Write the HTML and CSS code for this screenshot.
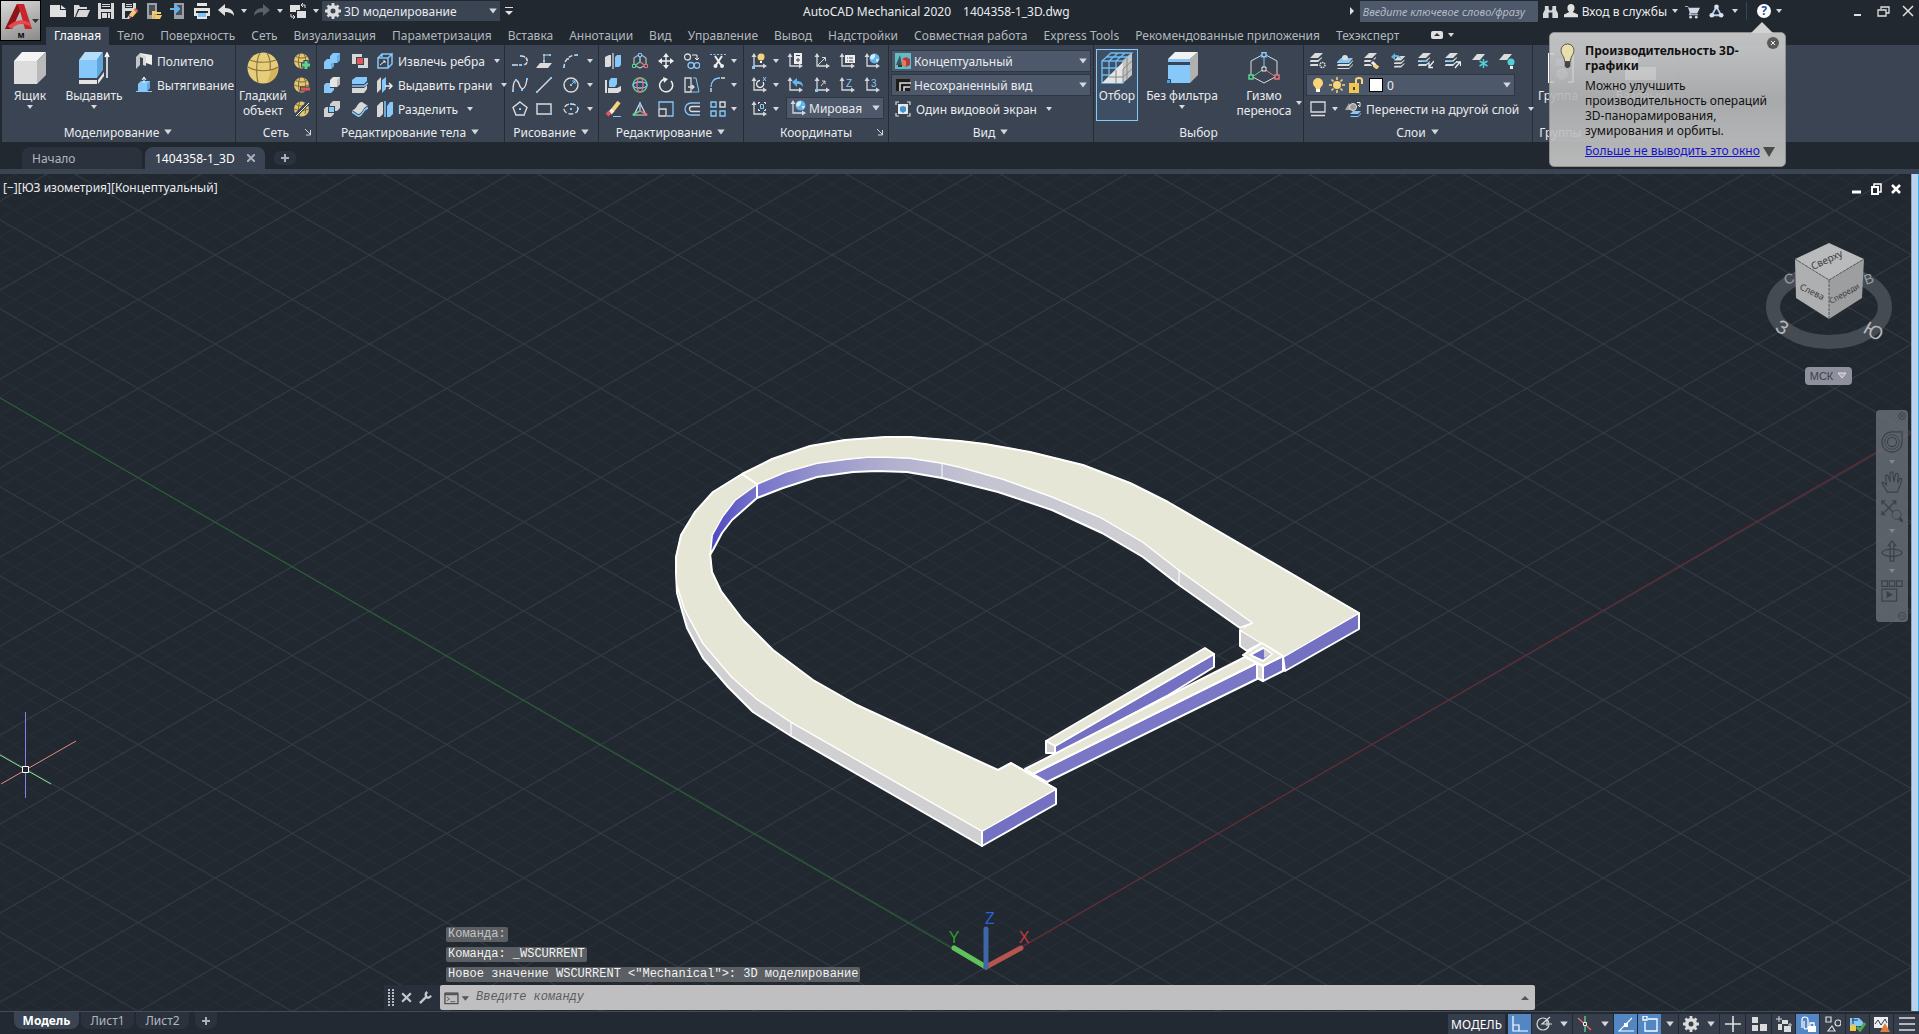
FILE: index.html
```html
<!DOCTYPE html>
<html lang="ru">
<head>
<meta charset="utf-8">
<title>AutoCAD Mechanical 2020 — 1404358-1_3D.dwg</title>
<link rel="stylesheet" href="styles.css">
</head>
<body>
<svg class="defs" aria-hidden="true">
  <symbol id="new" viewBox="0 0 18 16"><path fill="#e0e0e0" d="M1 2h10v5h6v7H1zM12 2l5 4h-5z"/></symbol>
  <symbol id="open" viewBox="0 0 18 16"><path fill="#d8d8d8" d="M1 2h5l1 2h7v2H5L2 14H1zM6 7h11l-3 7H3z"/></symbol>
  <symbol id="save" viewBox="0 0 16 16"><path fill="#d8d8d8" d="M0 0h16v16H0z"/><path fill="#212830" d="M3 0h10v6H3zM3 9h10v7H3z"/><path fill="#d8d8d8" d="M4 1h8v1H4zM4 3h8v1H4zM4 10h5v5H4zM10 10h2v5h-2z"/></symbol>
  <symbol id="saveas" viewBox="0 0 16 16"><path fill="#d8d8d8" d="M0 0h14v9l-7 7H0z"/><path fill="#212830" d="M3 0h8v5H3zM3 8h7l-5 7H3z"/><path fill="#d8d8d8" d="M4 1h6v1H4zM4 3h6v1H4z"/><path stroke="#f2c96b" stroke-width="4" d="M14 7l-5 6"/><path fill="#e06060" d="M13 5l3 2-1 3-3-3zM7 15l0-3 3 2z"/></symbol>
  <symbol id="webopen" viewBox="0 0 16 16"><path fill="#9aa0a6" d="M1 0h10v16H1z"/><path fill="#4a5058" d="M3 2h6v10H3z"/><path fill="#f2c96b" d="M6 8h4l1 1h4v2H9l-2 5H6zM9 12h7l-2 4H8z"/></symbol>
  <symbol id="websave" viewBox="0 0 16 16"><path fill="#9aa0a6" d="M4 0h10v16H4z"/><path fill="#4a5058" d="M6 2h6v10H6z"/><path fill="none" stroke="#5cb8f5" stroke-width="2" d="M0 6h8M5 2l4 4-4 4"/></symbol>
  <symbol id="print" viewBox="0 0 16 16"><path fill="#e4e4e4" d="M3 0h10v3H3zM0 5h16v8H0z"/><path fill="#212830" d="M2 8h12v2H2z"/><path fill="#e4e4e4" d="M3 10h10v6H3z"/><path fill="#7cc4fa" d="M4 10h8v4H4z"/></symbol>
  <symbol id="undo" viewBox="0 0 18 16"><path fill="#e0e0e0" d="M1 7l7-6v4c6 0 9 3 9 8-2-3-5-4-9-4v4z"/></symbol>
  <symbol id="redo" viewBox="0 0 18 16"><path fill="#5a616b" d="M17 7l-7-6v4c-6 0-9 3-9 8 2-3 5-4 9-4v4z"/></symbol>
  <symbol id="swap" viewBox="0 0 18 16"><path fill="#e0e0e0" d="M1 2h10v7H1zM8 8h9v7H8z"/><path fill="#212830" d="M7 7h9v1H8v1H7z"/><path fill="none" stroke="#e0e0e0" d="M12 2h4v3M14 0l-2 2 2 2M2 11v3h4M4 12l2 2-2 2"/></symbol>
  <symbol id="gear" viewBox="0 0 16 16"><circle cx="8" cy="8" r="4.300" fill="none" stroke="#dcdcdc" stroke-width="3.600"/><path stroke="#dcdcdc" stroke-width="2.800" d="M8 0v4M8 12v4M0 8h4M12 8h4M2.500 2.500l2.500 2.500M11 11l2.500 2.500M13.500 2.500L11 5M5 11l-2.500 2.500"/></symbol>
  <symbol id="dn" viewBox="0 0 8 8"><path fill="#d4d7dc" d="M1 2h6L4 6z"/></symbol>
  <symbol id="corner" viewBox="0 0 8 8"><path fill="none" stroke="#d4d7dc" d="M1 1l5 5M6.500 2v5H2"/></symbol>
  <symbol id="bino" viewBox="0 0 16 16"><path fill="#d4d7dc" d="M2 2h4v3l1 2h2l1-2V2h4v4l2 4v5h-6V9H6v6H0v-5l2-4z"/></symbol>
  <symbol id="user" viewBox="0 0 16 16"><path fill="#e0e0e0" d="M8 0c5 0 5 7 2 9l6 3v3H0v-3l6-3C3 7 3 0 8 0z"/></symbol>
  <symbol id="cart" viewBox="0 0 16 16"><path fill="#d0d8e8" d="M0 2h3l1 2h12l-3 6H6v1h8v1H4l1-3-2-6H0z"/><circle cx="6" cy="14" r="1.500" fill="#d0d8e8"/><circle cx="12" cy="14" r="1.500" fill="#d0d8e8"/></symbol>
  <symbol id="a360" viewBox="0 0 16 16"><path fill="none" stroke="#b9cdea" stroke-width="2" d="M8 3L3 12h10z"/><circle cx="8" cy="3" r="2.500" fill="#d6e2f4"/><circle cx="3" cy="12" r="2.500" fill="#d6e2f4"/><circle cx="13" cy="12" r="2.500" fill="#d6e2f4"/></symbol>

  <symbol id="box" viewBox="0 0 32 32"><path fill="#dcdcdc" d="M0 9h23v23H0z"/><path fill="#f4f4f4" d="M0 9l8-9h24l-9 9z"/><path fill="#b9b9b9" d="M23 9l9-9v23l-9 9z"/></symbol>
  <symbol id="extrude" viewBox="0 0 32 32"><path fill="#86c8fa" d="M1 8h18v18H1z"/><path fill="#b4dcfb" d="M1 8l6-8h18l-6 8z"/><path fill="#5fa6dc" d="M19 8l6-8v18l-6 8z"/><path fill="#e4e4e4" d="M1 28h18v4H1zM20 28l6-8v4l-6 8z"/><path fill="none" stroke="#fff" stroke-width="1.500" d="M29 26V3M27 5l2-4 2 4"/></symbol>
  <symbol id="poly" viewBox="0 0 16 16"><path fill="#c4c4c4" d="M0 4l4-4v12l-4 4z"/><path fill="#eee" d="M4 0l12 2v10l-6-2V5L4 4z"/><path fill="#dadada" d="M4 1l6 2v10l-3-1V5L4 4z"/></symbol>
  <symbol id="pull" viewBox="0 0 16 16"><path fill="#86c8fa" d="M2 7l3-3h9v7l-3 3H2z"/><path fill="#5fa6dc" d="M11 7l3-3v7l-3 3z"/><path stroke="#fff" fill="none" d="M8 6V0M6 3l2-3 2 3"/><path stroke="#86c8fa" d="M0 14.500h16"/></symbol>
  <symbol id="smooth" viewBox="0 0 32 32"><circle cx="16" cy="16" r="15.500" fill="#e7cd79"/><path fill="#d4b55b" d="M20 31c8-2 11-10 11-15l-7 3z"/><path fill="none" stroke="#8a7640" stroke-width="1.200" d="M1 15c8 5 22 5 30 0M3 8c7 3 19 3 26 0M13 1c-4 6-4 22-2 30M20 1c3 5 4 10 3 17"/></symbol>
  <symbol id="ball" viewBox="0 0 16 16"><circle cx="7.500" cy="8" r="7.500" fill="#e3c871"/><path fill="none" stroke="#7d6b3b" d="M0 8c5 2 10 2 15 0M2 3.500c3 2 8 2 11 0M6 .5c-2 4-2 11 0 15M10 1c2 3 2 8 1 12"/></symbol>
  <symbol id="mplus" viewBox="0 0 16 16"><use href="#ball"/><path stroke="#3b4453" stroke-width="5" d="M12 7v9M7 12h9"/><path stroke="#5fd38d" stroke-width="3" d="M12 8v8M8 12h8"/></symbol>
  <symbol id="mminus" viewBox="0 0 16 16"><use href="#ball"/><path stroke="#3b4453" stroke-width="5" d="M6 12h10"/><path stroke="#e0575b" stroke-width="3" d="M7 12h9"/></symbol>
  <symbol id="mcrease" viewBox="0 0 16 16"><use href="#ball"/><path stroke="#3b4453" stroke-width="4" d="M1 15L15 1"/><path stroke="#eee" d="M2 15L15 2"/></symbol>
  <symbol id="union" viewBox="0 0 16 16"><path fill="#86c8fa" d="M0 9l3-3h3V3l3-3h7v7l-3 3h-3v3l-3 3H0z"/><path fill="#62acdf" d="M13 3l3-3v7l-3 3zM7 10h3v3l-3 3z"/></symbol>
  <symbol id="subtract" viewBox="0 0 16 16"><path fill="#86c8fa" d="M0 8l2-2h4v5h4v2l-3 3H0z"/><path fill="#e4e4e4" d="M6 3l3-3h7v7l-3 3H6z"/><path fill="#bbb" d="M13 3l3-3v7l-3 3z"/></symbol>
  <symbol id="intersect" viewBox="0 0 16 16"><path fill="#d0d0d0" d="M0 8l2-2h8v7l-3 3H0zM6 3l3-3h7v7l-3 3H6z"/><path fill="#3b4453" d="M4 5h7v7H4z"/><path fill="#86c8fa" d="M5 6h5v5H5z"/></symbol>
  <symbol id="interf" viewBox="0 0 16 16"><path fill="#d8d8d8" d="M0 1h10v10H0zM6 5h10v10H6z"/><path fill="#3b4453" d="M4 4h8v8H4z"/><path fill="#e0575b" d="M5 5h6v6H5z"/></symbol>
  <symbol id="slice" viewBox="0 0 16 16"><path fill="#86c8fa" d="M0 3l4-3h11v4l-3 3H0z"/><path fill="#d8d8d8" d="M0 11h12l3-3v4l-3 4H0z"/><path stroke="#86c8fa" fill="none" stroke-width="1.500" d="M0 9h12l4-3"/></symbol>
  <symbol id="thick" viewBox="0 0 16 16"><path fill="#d8d8d8" d="M0 9c5 0 5-8 10-8l6 4c-5 0-5 8-10 8z"/><path fill="#86c8fa" d="M0 10l6 4c5 0 5-8 10-8v2c-5 1-5 8-10 8l-6-4z"/></symbol>
  <symbol id="edges" viewBox="0 0 16 16"><path fill="none" stroke="#86c8fa" stroke-width="1.500" d="M1 5h10v10H1zM1 5l4-4h10l-4 4M15 1v10l-4 4M5 1v3"/><path stroke="#eee" fill="none" d="M3 12l5-4M6 8h2v2"/></symbol>
  <symbol id="faces" viewBox="0 0 16 16"><path fill="#d8d8d8" d="M0 4l4-4v12l-4 4z"/><path fill="#86c8fa" d="M5 3l4-3v12l-4 4z"/><path stroke="#eee" stroke-width="1.500" fill="none" d="M8 9h7M12 6l3 3-3 3"/></symbol>
  <symbol id="separate" viewBox="0 0 16 16"><path fill="#d8d8d8" d="M0 5l4-4h2v12l-3 3H0z"/><path fill="#86c8fa" d="M10 5l3-4h3v12l-3 3h-3z"/><path stroke="#86c8fa" stroke-width="1.500" d="M8 0v16"/></symbol>

  <symbol id="pline" viewBox="0 0 16 16"><path fill="none" stroke="#dcdcdc" stroke-width="1.500" stroke-dasharray="4 1" d="M2 12h6M9 3c8 0 8 9 2 9"/><path fill="#86c8fa" d="M0 11h2v2H0zM8 11h2v2H8zM8 2h2v2H8z"/></symbol>
  <symbol id="plane" viewBox="0 0 16 16"><path fill="#dcdcdc" d="M0 15l4-5h12l-4 5z"/><path fill="none" stroke="#dcdcdc" d="M8 12V2h6"/><path fill="#86c8fa" d="M7 1h2v2H7zM13 1h2v2h-2zM7 7h2v2H7z"/></symbol>
  <symbol id="arc" viewBox="0 0 16 16"><path fill="none" stroke="#dcdcdc" stroke-width="1.400" stroke-dasharray="4 2" d="M1 15C1 7 6 2 14 2"/><path fill="#86c8fa" d="M0 13h2v2H0zM13 1h2v2h-2zM4 5h2v2H4z"/></symbol>
  <symbol id="spline" viewBox="0 0 16 16"><path fill="none" stroke="#dcdcdc" stroke-width="1.400" d="M1 14C1 2 5 1 7 7s6 8 8-5"/><path fill="#86c8fa" d="M0 13h2v2H0zM3 2h2v2H3zM9 12h2v2H9zM14 1h2v2h-2z"/></symbol>
  <symbol id="line" viewBox="0 0 16 16"><path stroke="#dcdcdc" stroke-width="1.400" d="M1 15L15 1"/><path fill="#86c8fa" d="M0 14h2v2H0zM14 0h2v2h-2z"/></symbol>
  <symbol id="circle" viewBox="0 0 16 16"><circle cx="8" cy="8" r="7" fill="none" stroke="#dcdcdc" stroke-width="1.400"/><path stroke="#86c8fa" fill="none" d="M8 8l4-4M9 4h3v3"/><path fill="#86c8fa" d="M7 7h2v2H7z"/></symbol>
  <symbol id="pent" viewBox="0 0 16 16"><path fill="none" stroke="#dcdcdc" stroke-width="1.400" d="M8 1l7 5.500L12 14H4L1 6.500z"/><path fill="#86c8fa" d="M7 7h2v2H7zM11 13h2v2h-2z"/></symbol>
  <symbol id="rect" viewBox="0 0 16 16"><path fill="none" stroke="#dcdcdc" stroke-width="1.400" d="M1 3h14v10H1z"/><path fill="#86c8fa" d="M0 2h2v2H0zM14 12h2v2h-2z"/></symbol>
  <symbol id="ellipse" viewBox="0 0 16 16"><ellipse cx="8" cy="8" rx="7" ry="5" fill="none" stroke="#dcdcdc" stroke-width="1.300" stroke-dasharray="5 2"/><path fill="#86c8fa" d="M7 7h2v2H7zM14 7h2v2h-2zM7 2h2v2H7z"/></symbol>

  <symbol id="mirror" viewBox="0 0 16 16"><path fill="#dcdcdc" d="M0 4l4-2h2v11l-2 1H0z"/><path fill="#86c8fa" d="M10 4l2-2h4v10l-2 2h-4z"/><path stroke="#fff" d="M8 0v16"/></symbol>
  <symbol id="gizmo" viewBox="0 0 16 16"><path fill="none" stroke="#b8bcc2" stroke-width="1.200" d="M8 1l6 4v7l-6 3-6-3V5z"/><path stroke="#86c8fa" stroke-width="1.500" d="M8 1v8"/><path stroke="#5fd38d" stroke-width="1.500" d="M8 9l-6 4"/><path stroke="#e0777b" stroke-width="1.500" d="M8 9l6 4"/><path fill="#3b4453" stroke="#86c8fa" d="M6.500.5h3v3h-3z"/><path fill="#3b4453" stroke="#5fd38d" d="M.5 11.500h3v3h-3z"/><path fill="#3b4453" stroke="#e0777b" d="M12.500 11.500h3v3h-3z"/></symbol>
  <symbol id="move" viewBox="0 0 16 16"><path stroke="#eee" stroke-width="1.400" d="M8 1v14M1 8h14"/><path fill="#eee" d="M8 0l3 4H5zM8 16l3-4H5zM0 8l4-3v6zM16 8l-4-3v6z"/></symbol>
  <symbol id="copy" viewBox="0 0 16 16"><circle cx="3.500" cy="4" r="3" fill="none" stroke="#dcdcdc" stroke-width="1.300"/><circle cx="7" cy="12.500" r="3" fill="none" stroke="#86c8fa" stroke-width="1.300"/><circle cx="13" cy="12.500" r="2.800" fill="none" stroke="#86c8fa" stroke-width="1.300"/><path fill="none" stroke="#eee" d="M8 2h5v5M11 5l2 2 2-2"/></symbol>
  <symbol id="trim" viewBox="0 0 16 16"><path stroke="#86c8fa" stroke-dasharray="2 1.500" d="M0 1.500h16"/><path stroke="#eee" stroke-width="2" fill="none" d="M5 3l6 9M12 3l-6 9"/><circle cx="5.500" cy="13" r="2" fill="#eee"/><circle cx="12" cy="13" r="2" fill="#eee"/></symbol>
  <symbol id="align" viewBox="0 0 16 16"><path fill="#86c8fa" d="M4 4l2-3h6v6l-2 3H4z"/><path fill="#dcdcdc" d="M0 3h2v13H0zM3 11h9l4-2v5l-3 2H3z"/></symbol>
  <symbol id="orbit" viewBox="0 0 16 16"><circle cx="8" cy="8" r="7" fill="none" stroke="#5fd38d" stroke-width="1.300"/><ellipse cx="8" cy="8" rx="7" ry="3" fill="none" stroke="#86c8fa" stroke-width="1.300"/><ellipse cx="8" cy="8" rx="3" ry="7" fill="none" stroke="#e0777b" stroke-width="1.300"/></symbol>
  <symbol id="rotate" viewBox="0 0 16 16"><path fill="none" stroke="#eee" stroke-width="1.500" d="M13 4A6.500 6.500 0 1 1 6 2.200"/><path fill="#eee" d="M5 0l5 2-4 4z"/></symbol>
  <symbol id="stretch" viewBox="0 0 16 16"><path fill="none" stroke="#dcdcdc" stroke-width="1.300" d="M7 1H1v14h6zM4 10h6M8 8l2 2-2 2"/><path fill="none" stroke="#86c8fa" d="M9 1h3l3 14H7"/></symbol>
  <symbol id="fillet" viewBox="0 0 16 16"><path fill="none" stroke="#86c8fa" stroke-width="1.400" d="M1 10C1 5 4 1 10 1"/><path fill="none" stroke="#dcdcdc" stroke-width="1.400" d="M1 15v-4M11 1h4"/></symbol>
  <symbol id="erase" viewBox="0 0 16 16"><path stroke="#f6d27c" stroke-width="4" d="M14 1L7 10"/><path stroke="#eee" stroke-width="4" d="M8 9l-3 3"/><path stroke="#e0575b" stroke-width="4" d="M5 11l-3 3"/><path stroke="#86c8fa" d="M8 15.500h8"/></symbol>
  <symbol id="scale3" viewBox="0 0 16 16"><path fill="none" stroke="#dcdcdc" stroke-width="1.200" d="M8 2L2 14h12z"/><path stroke="#86c8fa" stroke-width="1.400" d="M8 1v9"/><path stroke="#5fd38d" stroke-width="1.400" d="M8 10l-6 3"/><path stroke="#e0777b" stroke-width="1.400" d="M8 10l6 3"/><circle cx="2" cy="13.500" r="1.500" fill="#5fd38d"/><circle cx="14" cy="13.500" r="1.500" fill="#e0777b"/></symbol>
  <symbol id="scale" viewBox="0 0 16 16"><path fill="none" stroke="#86c8fa" stroke-width="1.300" d="M1 7V1h14v14H9"/><path fill="none" stroke="#dcdcdc" stroke-width="1.300" d="M1 8h7v7H1z"/></symbol>
  <symbol id="offset" viewBox="0 0 16 16"><path fill="none" stroke="#86c8fa" stroke-width="1.300" d="M16 2H7a6 6 0 0 0 0 12h9"/><path fill="none" stroke="#dcdcdc" stroke-width="1.300" d="M16 5.500H8a2.500 2.500 0 0 0 0 5h8"/></symbol>
  <symbol id="array" viewBox="0 0 16 16"><path fill="none" stroke="#86c8fa" stroke-width="1.400" d="M1 1h5v5H1zM10 10h5v5h-5zM1 10h5v5H1z"/><path fill="none" stroke="#dcdcdc" stroke-width="1.400" d="M10 1h5v5h-5z"/></symbol>

  <symbol id="axes" viewBox="0 0 16 16"><path fill="none" stroke="#d4d7dc" stroke-width="1.300" d="M3 2v11h11"/><path fill="#d4d7dc" d="M3 0l2.500 4H.5zM16 13l-4 2.500v-5z"/></symbol>
  <symbol id="u1" viewBox="0 0 16 16"><use href="#axes"/><circle cx="10" cy="4" r="3.500" fill="#f6d27c"/><path fill="#fff" d="M9 8h2v2H9z"/><path fill="#86c8fa" d="M1 13h3v3H1z"/></symbol>
  <symbol id="u2" viewBox="0 0 16 16"><use href="#axes"/><path fill="#eee" d="M7 0h8v11H7z"/><path stroke="#3b4453" fill="none" d="M9 2.500h4M11 5v4M9 7h4"/></symbol>
  <symbol id="u3" viewBox="0 0 16 16"><use href="#axes"/><path stroke="#d4d7dc" d="M4 12l7-7M8 4.500h3.500V8" fill="none"/></symbol>
  <symbol id="u4" viewBox="0 0 16 16"><use href="#axes"/><path fill="#eee" d="M6 2h10v8H6z"/><path stroke="#3b4453" d="M8 5h1M10 5h4M8 8h1M10 8h4"/></symbol>
  <symbol id="u5" viewBox="0 0 16 16"><use href="#axes"/><circle cx="10.500" cy="5.500" r="5" fill="#64b4ea"/><path fill="#d7ecfa" d="M7 2l4-1v3l-3 3-2-2zM12 6l3 0-2 4z"/></symbol>
  <symbol id="u6" viewBox="0 0 16 16"><use href="#axes"/><path fill="none" stroke="#eee" stroke-width="1.300" d="M12 5a3.500 3.500 0 1 1-3-1.500"/><path stroke="#86c8fa" d="M12 0l3 4M15 0l-3 4"/></symbol>
  <symbol id="u7" viewBox="0 0 16 16"><use href="#axes"/><path fill="#64b4ea" d="M5 5l5-4v3c4 0 6 2 6 6-2-3-3-3-6-3v3z"/></symbol>
  <symbol id="u8" viewBox="0 0 16 16"><use href="#axes"/><path stroke="#d4d7dc" fill="none" d="M7 9l4-5M8 4h3v3"/><path fill="#86c8fa" d="M1 12h3v3H1z"/></symbol>
  <symbol id="u11" viewBox="0 0 16 16"><use href="#axes"/><path fill="none" stroke="#eee" d="M7.500 3V1.500H9M13 1.500h1.500V3M14.500 8v1.500H13M9 9.500H7.500V8"/><path fill="none" stroke="#86c8fa" d="M9.500 3.500h3v4h-3z"/></symbol>
  <symbol id="concept" viewBox="0 0 16 16"><path fill="#5fbfc0" d="M0 0h16v16H0z"/><path fill="#3f4f66" d="M5 2L1 12h6z"/><path fill="#b8344a" d="M7 6l4-2 4 2v6l-4 2-4-2z"/><path fill="#e08050" d="M7 6l4 2v6l-4-2z"/><path fill="#333" d="M3 12h4v2H3z"/></symbol>
  <symbol id="viewic" viewBox="0 0 16 16"><path fill="#1c1c1c" stroke="#555" d="M.5 1.500h15v13H.5z"/><path fill="none" stroke="#ddd" stroke-width="1.500" d="M5 14V6h11M9 14v-4h6"/></symbol>
  <symbol id="vport" viewBox="0 0 16 16"><path fill="none" stroke="#dcdcdc" stroke-width="1.200" d="M1 4V1h3M12 1h3v3M15 12v3h-3M4 15H1v-3"/><path fill="#e8e8e8" d="M3 3h10v10H3z"/><path fill="#3f93d0" d="M5 6l3-1 3 1v4l-3 2-3-2z"/></symbol>

  <symbol id="cull" viewBox="0 0 32 32"><path fill="none" stroke="#6db9ee" stroke-width="1.400" d="M1 9h21v22H1zM1 9l9-8h21l-9 8M8 9v22M15 9v22M1 16h21M1 23h21M8 9l9-8M15 9l9-8M5 5h21"/><path fill="#e4e4e4" d="M22 10v21H1z"/><path fill="#c4c4c4" d="M22 9l9-8v22l-9 8z"/><path stroke="#888" fill="none" d="M15 18v13M22 17v14M8 25h14M22 17l9-8M22 25l9-8M26 6v21"/></symbol>
  <symbol id="nofilter" viewBox="0 0 32 32"><path fill="#86c8fa" d="M2 7h22v3H2zM2 13h22v18H2z"/><path fill="#f2f2f2" d="M2 7l7-7h23l-8 7z"/><path fill="#b0b0b0" d="M24 7l8-7v23l-8 8z"/><path fill="#3ea4e6" stroke="#3b4453" d="M.5 27.500h4v4h-4z"/></symbol>
  <symbol id="giz32" viewBox="0 0 32 32"><path fill="none" stroke="#dcdcdc" d="M16 2l13 7v15l-13 7-13-7V9z"/><path stroke="#86c8fa" d="M16 4v13"/><path stroke="#5fd38d" d="M16 17L4 25"/><path stroke="#e0777b" d="M16 17l12 8"/><path fill="#3b4453" stroke="#86c8fa" stroke-width="1.500" d="M14 .7h4v4h-4z"/><path fill="#3b4453" stroke="#eee" d="M14 15h4v4h-4z"/><path fill="#3b4453" stroke="#5fd38d" stroke-width="1.500" d="M1 23h4v4H1z"/><path fill="#3b4453" stroke="#e0777b" stroke-width="1.500" d="M27 23h4v4h-4z"/></symbol>

  <symbol id="lay" viewBox="0 0 16 16"><path fill="#dcdcdc" d="M0 5l5-5h8L8 5zM0 8l1-1h7l4-3v1L8 9H0zM0 12l1-1h7l4-3v1l-4 4H0z"/></symbol>
  <symbol id="l1" viewBox="0 0 16 16"><use href="#lay"/><circle cx="12.500" cy="12" r="4.500" fill="#3b4453"/><circle cx="12.500" cy="12" r="2.500" fill="none" stroke="#dcdcdc" stroke-width="1.500" stroke-dasharray="1.500 .7"/></symbol>
  <symbol id="l2" viewBox="0 0 16 16"><path fill="#86c8fa" d="M0 9l4-4h12l-4 5H0z"/><path fill="#dcdcdc" d="M0 13l1-2h11l4-4v1l-4 5zM0 16l1-1h11l4-4v1l-4 4zM5 5a3 3 0 1 1 6 0c0 3-6 3-6 0z"/></symbol>
  <symbol id="l3" viewBox="0 0 16 16"><use href="#lay"/><path stroke="#3b4453" stroke-width="6" d="M7 8l9 7"/><path stroke="#f6d27c" stroke-width="4" d="M10 12l4 3"/><path stroke="#eee" stroke-width="3" d="M8 9l3 3"/></symbol>
  <symbol id="l4" viewBox="0 0 16 16"><g transform="translate(3 3)"><use href="#lay" width="14" height="14"/></g><path fill="#64b4ea" d="M0 4l4-4v2c4 0 6 1 6 4-2-2-3-2-6-2v3z"/></symbol>
  <symbol id="l5" viewBox="0 0 16 16"><use href="#lay"/><path fill="#64b4ea" d="M0 8l1-1h7l2 2-2 0z"/><path fill="none" stroke="#eee" stroke-width="1.300" d="M16 8l-5 6M11 10v4.500h4"/></symbol>
  <symbol id="l6" viewBox="0 0 16 16"><use href="#lay"/><path fill="#64b4ea" d="M0 8l1-1h7v2z"/><path fill="none" stroke="#eee" stroke-width="1.300" d="M10 15l5-6M11 9h4.500v4"/></symbol>
  <symbol id="l7" viewBox="0 0 16 16"><path fill="#dcdcdc" d="M0 7l5-6h8L8 7z"/><path stroke="#52d0d8" stroke-width="1.500" d="M11.500 6v9M7.500 8l8 5M15.500 8l-8 5"/></symbol>
  <symbol id="l8" viewBox="0 0 16 16"><path fill="#dcdcdc" d="M0 7l5-6h8L8 7z"/><circle cx="12" cy="9" r="3.500" fill="#52d0d8"/><path fill="#eee" d="M11 13h3v3h-3z"/></symbol>
  <symbol id="bulb" viewBox="0 0 14 16"><path fill="#f9d57a" d="M7 1a5 5 0 0 1 5 5c0 3-2 3-3 6H5C4 9 2 9 2 6a5 5 0 0 1 5-5z"/><path fill="#fff" d="M5 12h4v3H5z"/></symbol>
  <symbol id="sun" viewBox="0 0 16 16"><circle cx="8" cy="8" r="4" fill="#f9d57a"/><path stroke="#f9d57a" stroke-width="1.500" d="M8 0v3M8 13v3M0 8h3M13 8h3M2.500 2.500l2 2M11.500 11.500l2 2M13.500 2.500l-2 2M4.500 11.500l-2 2"/></symbol>
  <symbol id="lock" viewBox="0 0 16 16"><path fill="#f2c64e" d="M1 6h10v10H1z"/><path fill="none" stroke="#f9d57a" stroke-width="2" d="M8 6V3q0-2 3-2t3 2v4"/><path fill="#3b4453" d="M5 10h2v3H5z"/></symbol>
  <symbol id="laystate" viewBox="0 0 16 16"><path fill="none" stroke="#dcdcdc" stroke-width="1.300" d="M1 1h14v10H1zM1 14.500h14"/></symbol>
  <symbol id="movelay" viewBox="0 0 16 16"><path fill="#aaa" d="M0 9l4-7 3 7z"/><circle cx="8" cy="6" r="3.500" fill="#999" stroke="#ddd"/><path fill="none" stroke="#eee" d="M12 1.500h3v4M13 4l2 2"/><path fill="#86c8fa" d="M5 13l3-3h8l-3 3zM5 16l1-1h7l3-3v1l-3 3z"/></symbol>
  <symbol id="group" viewBox="0 0 32 32"><path fill="none" stroke="#fff" stroke-width="2" d="M12 2H7v28h5"/><path fill="none" stroke="#fff" stroke-width="2" d="M26 2h5v28h-5"/><path fill="#5f8fb8" d="M14 7h12v7H14z"/><circle cx="20" cy="22" r="5" fill="#8c929b" stroke="#ccc"/></symbol>
  <symbol id="base" viewBox="0 0 32 32"><path fill="#fff" d="M0 4h13v11h18v13H0z"/></symbol>

  <symbol id="s-ortho" viewBox="0 0 16 16"><path fill="none" stroke="#fff" stroke-width="1.200" d="M1 0v15h15M1 9h6v6"/></symbol>
  <symbol id="s-polar" viewBox="0 0 16 16"><circle cx="7" cy="8" r="6" fill="none" stroke="#d4d7dc" stroke-width="1.200"/><path fill="none" stroke="#d4d7dc" stroke-width="1.200" d="M16 8H6l8-7M11 4v6"/></symbol>
  <symbol id="s-iso" viewBox="0 0 16 16"><path stroke="#f0666a" stroke-width="1.400" d="M1 2l13 12"/><path stroke="#5fd38d" stroke-width="1.400" d="M8 0v16"/><path fill="#3b4453" stroke="#eee" d="M6.500 6.500h3v3h-3z"/></symbol>
  <symbol id="s-track" viewBox="0 0 16 16"><path fill="none" stroke="#fff" stroke-width="1.200" d="M14 2L1 15h15"/><path fill="#fff" d="M6 7h4v4H6z"/></symbol>
  <symbol id="s-snap" viewBox="0 0 16 16"><path fill="none" stroke="#fff" stroke-width="1.300" d="M6 3h9v12H3V6M1 0h4v4H1z"/></symbol>
  <symbol id="s-plus" viewBox="0 0 16 16"><path stroke="#e0e0e0" stroke-width="1.600" d="M8 0v16M0 8h16"/></symbol>
  <symbol id="s-quick" viewBox="0 0 16 16"><path fill="#dcdcdc" d="M1 1h6v6H1zM1 9h6v6H1zM9 8h7v7H9z"/></symbol>
  <symbol id="s-lock" viewBox="0 0 16 16"><path fill="none" stroke="#dcdcdc" d="M3 0v6M0 3h6"/><path fill="#dcdcdc" d="M6 4h6v4H6zM2 8h4v6H2zM8 10h7v6H8z"/><path fill="none" stroke="#dcdcdc" d="M13 10V8h2v2"/></symbol>
  <symbol id="s-ui" viewBox="0 0 16 16"><path fill="none" stroke="#fff" stroke-width="1.200" d="M2 12V4q0-3 3-3t3 3v7q0 2-2 2t-2-2V5"/><path fill="#fff" d="M8 10h8v6H8z"/><path fill="none" stroke="#fff" stroke-width="1.300" d="M10 10V7h4v3"/></symbol>
  <symbol id="s-iso2" viewBox="0 0 16 16"><path fill="none" stroke="#dcdcdc" stroke-width="1.200" d="M1 1h5v5H1zM7 10l3 5H3z"/><circle cx="13" cy="7" r="3" fill="none" stroke="#dcdcdc" stroke-width="1.200"/></symbol>
  <symbol id="s-hw" viewBox="0 0 16 16"><path fill="#86c8fa" d="M0 2h9l4 4v4H0z"/><path fill="#f2c64e" d="M0 9h6v6H0z"/><path fill="none" stroke="#4fa84f" stroke-width="3" d="M7 11l3 3 5-7"/><path stroke="#235" d="M2 4h6M3 2v6"/></symbol>
  <symbol id="s-perf" viewBox="0 0 16 16"><path fill="#eee" d="M0 1h14v11H0z"/><path fill="none" stroke="#335" d="M1 8l3-4 3 5 4-6 2 4"/><path fill="#e07b39" d="M11 7l5 9H6z"/></symbol>
  <symbol id="s-menu" viewBox="0 0 16 16"><path stroke="#e0e0e0" stroke-width="1.600" d="M0 2h16M0 8h16M0 14h16"/></symbol>
</svg>

<div class="app">
  <header class="titlebar">
    <button class="logo" aria-label="Меню приложения">
      <svg viewBox="0 0 40 40"><path fill="#c9252c" d="M4 28L16 3h7l8 25h-7L19 10l-8 18z"/><path fill="#8d1419" d="M16 3l3 7-8 18H4z"/><path fill="#e8474d" d="M7 25c7-6 14-8 22-3l1 4c-8-5-14-3-20 2z"/><path fill="#333" d="M31 18h7l-3.500 4z"/><text x="20" y="37" text-anchor="middle" class="logo-m">M</text></svg>
    </button>
    <div class="bars">
      <div class="topline">
        <nav class="qat" aria-label="Быстрый доступ">
          <button aria-label="Создать"><svg><use href="#new"/></svg></button>
          <button aria-label="Открыть"><svg><use href="#open"/></svg></button>
          <button aria-label="Сохранить"><svg><use href="#save"/></svg></button>
          <button aria-label="Сохранить как"><svg><use href="#saveas"/></svg></button>
          <button aria-label="Открыть из веб"><svg><use href="#webopen"/></svg></button>
          <button aria-label="Сохранить в веб"><svg><use href="#websave"/></svg></button>
          <button aria-label="Печать"><svg><use href="#print"/></svg></button>
          <button aria-label="Отменить"><svg><use href="#undo"/></svg></button>
          <button class="tiny" aria-label="Список отмены"><svg><use href="#dn"/></svg></button>
          <button class="after" aria-label="Повторить"><svg><use href="#redo"/></svg></button>
          <button class="tiny" aria-label="Список повтора"><svg><use href="#dn"/></svg></button>
          <button class="after" aria-label="Переключить окна"><svg><use href="#swap"/></svg></button>
          <button class="tiny" aria-label="Список окон"><svg><use href="#dn"/></svg></button>
        </nav>
        <div class="workspace combo"><svg class="i"><use href="#gear"/></svg><select aria-label="Рабочее пространство"><option>3D моделирование</option></select><svg class="d"><use href="#dn"/></svg></div>
        <button class="qat-more" aria-label="Адаптация панели"><svg viewBox="0 0 8 10"><path fill="#e0e0e0" d="M0 1h8v1H0zM0 5h8L4 9z"/></svg></button>
        <h1 class="caption"><span>AutoCAD Mechanical 2020</span><span>1404358-1_3D.dwg</span></h1>
        <div class="infocenter">
          <button class="tiny" aria-label="Свернуть поиск"><svg viewBox="0 0 8 8"><path fill="#e0e0e0" d="M2 0v8l4-4z"/></svg></button>
          <input class="search" type="text" aria-label="Поиск" placeholder="Введите ключевое слово/фразу">
          <button class="ic" aria-label="Найти"><svg><use href="#bino"/></svg></button>
          <button class="sign"><svg class="i"><use href="#user"/></svg><span>Вход в службы</span><svg class="d"><use href="#dn"/></svg></button>
          <button class="ic" aria-label="App Store"><svg><use href="#cart"/></svg></button>
          <button class="ic" aria-label="A360"><svg><use href="#a360"/></svg></button>
          <button class="tiny" aria-label="Меню A360"><svg><use href="#dn"/></svg></button>
          <button class="help" aria-label="Справка"><span>?</span></button>
          <button class="tiny" aria-label="Меню справки"><svg><use href="#dn"/></svg></button>
        </div>
        <div class="wins">
          <button aria-label="Свернуть"><svg viewBox="0 0 12 12"><path stroke="#e0e0e0" stroke-width="2" d="M2 10h7"/></svg></button>
          <button aria-label="Развернуть"><svg viewBox="0 0 12 12"><path fill="none" stroke="#e0e0e0" stroke-width="1.300" d="M4 4V2h8v6H9M1 5h8v6H1z"/></svg></button>
          <button aria-label="Закрыть"><svg viewBox="0 0 12 12"><path stroke="#e0e0e0" stroke-width="1.500" d="M1 1l10 10M11 1L1 11"/></svg></button>
        </div>
      </div>
      <nav class="tabs" aria-label="Вкладки ленты">
        <button class="on">Главная</button><button>Тело</button><button>Поверхность</button><button>Сеть</button><button>Визуализация</button><button>Параметризация</button><button>Вставка</button><button>Аннотации</button><button>Вид</button><button>Управление</button><button>Вывод</button><button>Надстройки</button><button>Совместная работа</button><button>Express Tools</button><button>Рекомендованные приложения</button><button>Техэксперт</button>
        <button class="ribbon-min" aria-label="Свернуть ленту"><svg viewBox="0 0 24 8"><rect width="12" height="8" rx="2" fill="#e0e0e0"/><path fill="#333" d="M6 2l3 3H3z"/><path fill="#d4d7dc" d="M17 2h6l-3 4z"/></svg></button>
      </nav>
    </div>
  </header>

  <main class="ribbon">
    <section class="panel p-model">
      <div class="body">
        <button class="big"><svg><use href="#box"/></svg><span>Ящик</span><svg class="d"><use href="#dn"/></svg></button>
        <button class="big"><svg><use href="#extrude"/></svg><span>Выдавить</span><svg class="d"><use href="#dn"/></svg></button>
        <div class="rows">
          <button class="row"><svg class="i"><use href="#poly"/></svg><span>Политело</span></button>
          <button class="row"><svg class="i"><use href="#pull"/></svg><span>Вытягивание</span></button>
        </div>
      </div>
      <h2>Моделирование<svg class="d"><use href="#dn"/></svg></h2>
    </section>
    <section class="panel p-mesh">
      <div class="body">
        <button class="big"><svg><use href="#smooth"/></svg><span>Гладкий объект</span></button>
        <div class="rows">
          <button class="sq" aria-label="Увеличить гладкость"><svg class="i"><use href="#mplus"/></svg></button>
          <button class="sq" aria-label="Уменьшить гладкость"><svg class="i"><use href="#mminus"/></svg></button>
          <button class="sq" aria-label="Сгиб"><svg class="i"><use href="#mcrease"/></svg></button>
        </div>
      </div>
      <h2>Сеть<svg class="launch"><use href="#corner"/></svg></h2>
    </section>
    <section class="panel p-solid">
      <div class="body">
        <button class="sq" aria-label="Объединение"><svg class="i"><use href="#union"/></svg></button>
        <button class="sq" aria-label="Взаимодействие"><svg class="i"><use href="#interf"/></svg></button>
        <button class="row"><svg class="i"><use href="#edges"/></svg><span>Извлечь ребра</span><svg class="d"><use href="#dn"/></svg></button>
        <button class="sq" aria-label="Вычитание"><svg class="i"><use href="#subtract"/></svg></button>
        <button class="sq" aria-label="Разрез"><svg class="i"><use href="#slice"/></svg></button>
        <button class="row"><svg class="i"><use href="#faces"/></svg><span>Выдавить грани</span><svg class="d"><use href="#dn"/></svg></button>
        <button class="sq" aria-label="Пересечение"><svg class="i"><use href="#intersect"/></svg></button>
        <button class="sq" aria-label="Толщина"><svg class="i"><use href="#thick"/></svg></button>
        <button class="row"><svg class="i"><use href="#separate"/></svg><span>Разделить</span><svg class="d"><use href="#dn"/></svg></button>
      </div>
      <h2>Редактирование тела<svg class="d"><use href="#dn"/></svg></h2>
    </section>
    <section class="panel p-draw">
      <div class="body">
        <button class="sq" aria-label="Полилиния"><svg class="i"><use href="#pline"/></svg></button>
        <button class="sq" aria-label="Плоская поверхность"><svg class="i"><use href="#plane"/></svg></button>
        <button class="sq" aria-label="Дуга"><svg class="i"><use href="#arc"/></svg></button>
        <button class="dd" aria-label="Варианты дуги"><svg class="d"><use href="#dn"/></svg></button>
        <button class="sq" aria-label="Сплайн"><svg class="i"><use href="#spline"/></svg></button>
        <button class="sq" aria-label="Отрезок"><svg class="i"><use href="#line"/></svg></button>
        <button class="sq" aria-label="Круг"><svg class="i"><use href="#circle"/></svg></button>
        <button class="dd" aria-label="Варианты круга"><svg class="d"><use href="#dn"/></svg></button>
        <button class="sq" aria-label="Многоугольник"><svg class="i"><use href="#pent"/></svg></button>
        <button class="sq" aria-label="Прямоугольник"><svg class="i"><use href="#rect"/></svg></button>
        <button class="sq" aria-label="Эллипс"><svg class="i"><use href="#ellipse"/></svg></button>
        <button class="dd" aria-label="Варианты эллипса"><svg class="d"><use href="#dn"/></svg></button>
      </div>
      <h2>Рисование<svg class="d"><use href="#dn"/></svg></h2>
    </section>
    <section class="panel p-edit">
      <div class="body">
        <button class="sq" aria-label="3D-зеркало"><svg class="i"><use href="#mirror"/></svg></button>
        <button class="sq" aria-label="3D-перенос"><svg class="i"><use href="#gizmo"/></svg></button>
        <button class="sq" aria-label="Перенести"><svg class="i"><use href="#move"/></svg></button>
        <button class="sq" aria-label="Копировать"><svg class="i"><use href="#copy"/></svg></button>
        <button class="sq" aria-label="Обрезать"><svg class="i"><use href="#trim"/></svg></button>
        <button class="dd" aria-label="Варианты обрезки"><svg class="d"><use href="#dn"/></svg></button>
        <button class="sq" aria-label="3D-выравнивание"><svg class="i"><use href="#align"/></svg></button>
        <button class="sq" aria-label="3D-поворот"><svg class="i"><use href="#orbit"/></svg></button>
        <button class="sq" aria-label="Повернуть"><svg class="i"><use href="#rotate"/></svg></button>
        <button class="sq" aria-label="Растянуть"><svg class="i"><use href="#stretch"/></svg></button>
        <button class="sq" aria-label="Сопряжение"><svg class="i"><use href="#fillet"/></svg></button>
        <button class="dd" aria-label="Варианты сопряжения"><svg class="d"><use href="#dn"/></svg></button>
        <button class="sq" aria-label="Стереть"><svg class="i"><use href="#erase"/></svg></button>
        <button class="sq" aria-label="3D-масштаб"><svg class="i"><use href="#scale3"/></svg></button>
        <button class="sq" aria-label="Масштаб"><svg class="i"><use href="#scale"/></svg></button>
        <button class="sq" aria-label="Смещение"><svg class="i"><use href="#offset"/></svg></button>
        <button class="sq" aria-label="Массив"><svg class="i"><use href="#array"/></svg></button>
        <button class="dd" aria-label="Варианты массива"><svg class="d"><use href="#dn"/></svg></button>
      </div>
      <h2>Редактирование<svg class="d"><use href="#dn"/></svg></h2>
    </section>
    <section class="panel p-ucs">
      <div class="body">
        <button class="sq" aria-label="Значок ПСК"><svg class="i"><use href="#u1"/></svg></button>
        <button class="dd" aria-label="Варианты значка"><svg class="d"><use href="#dn"/></svg></button>
        <button class="sq" aria-label="ПСК"><svg class="i"><use href="#u2"/></svg></button>
        <button class="sq" aria-label="Начало ПСК"><svg class="i"><use href="#u3"/></svg></button>
        <button class="sq" aria-label="Именованные ПСК"><svg class="i"><use href="#u4"/></svg></button>
        <button class="sq" aria-label="МСК"><svg class="i"><use href="#u5"/></svg></button>
        <button class="sq" aria-label="Поворот ПСК"><svg class="i"><use href="#u6"/></svg></button>
        <button class="dd" aria-label="Варианты поворота"><svg class="d"><use href="#dn"/></svg></button>
        <button class="sq" aria-label="ПСК, предыдущая"><svg class="i"><use href="#u7"/></svg></button>
        <button class="sq" aria-label="Начало"><svg class="i"><use href="#u8"/></svg></button>
        <button class="sq" aria-label="Z-вектор"><svg class="i" viewBox="0 0 16 16"><use href="#axes"/><text x="7" y="10" class="icon-text">Z</text></svg></button>
        <button class="sq" aria-label="3 точки"><svg class="i" viewBox="0 0 16 16"><use href="#axes"/><text x="7" y="10" class="icon-text">3</text></svg></button>
        <button class="sq" aria-label="Вид ПСК"><svg class="i"><use href="#u11"/></svg></button>
        <button class="dd" aria-label="Варианты вида"><svg class="d"><use href="#dn"/></svg></button>
        <div class="combo"><svg class="i"><use href="#u5"/></svg><select aria-label="Система координат"><option>Мировая</option></select><svg class="d"><use href="#dn"/></svg></div>
      </div>
      <h2>Координаты<svg class="launch"><use href="#corner"/></svg></h2>
    </section>
    <section class="panel p-view">
      <div class="body">
        <div class="combo"><svg class="i"><use href="#concept"/></svg><select aria-label="Визуальный стиль"><option>Концептуальный</option></select><svg class="d"><use href="#dn"/></svg></div>
        <div class="combo"><svg class="i"><use href="#viewic"/></svg><select aria-label="Вид модели"><option>Несохраненный вид</option></select><svg class="d"><use href="#dn"/></svg></div>
        <button class="row"><svg class="i"><use href="#vport"/></svg><span>Один видовой экран</span><svg class="d"><use href="#dn"/></svg></button>
      </div>
      <h2>Вид<svg class="d"><use href="#dn"/></svg></h2>
    </section>
    <section class="panel p-select">
      <div class="body">
        <button class="big on"><svg><use href="#cull"/></svg><span>Отбор</span></button>
        <button class="big"><svg><use href="#nofilter"/></svg><span>Без фильтра</span><svg class="d"><use href="#dn"/></svg></button>
        <button class="big giz"><svg><use href="#giz32"/></svg><span>Гизмо переноса</span></button>
        <button class="dd side" aria-label="Варианты гизмо"><svg class="d"><use href="#dn"/></svg></button>
      </div>
      <h2>Выбор</h2>
    </section>
    <section class="panel p-layers">
      <div class="body">
        <div class="strip">
          <button class="sq" aria-label="Свойства слоя"><svg class="i"><use href="#l1"/></svg></button>
          <button class="sq" aria-label="Сделать текущим"><svg class="i"><use href="#l2"/></svg></button>
          <button class="sq" aria-label="Соответствие слоя"><svg class="i"><use href="#l3"/></svg></button>
          <button class="sq" aria-label="Предыдущий слой"><svg class="i"><use href="#l4"/></svg></button>
          <button class="sq" aria-label="Изолировать"><svg class="i"><use href="#l5"/></svg></button>
          <button class="sq" aria-label="Отменить изоляцию"><svg class="i"><use href="#l6"/></svg></button>
          <button class="sq" aria-label="Заморозить"><svg class="i"><use href="#l7"/></svg></button>
          <button class="sq" aria-label="Отключить слой"><svg class="i"><use href="#l8"/></svg></button>
        </div>
        <div class="combo"><svg class="i"><use href="#bulb"/></svg><svg class="i"><use href="#sun"/></svg><svg class="i"><use href="#lock"/></svg><i class="swatch"></i><select aria-label="Слой"><option>0</option></select><svg class="d"><use href="#dn"/></svg></div>
        <div class="strip">
          <button class="sq" aria-label="Состояние слоя"><svg class="i"><use href="#laystate"/></svg></button>
          <button class="dd" aria-label="Варианты слоя"><svg class="d"><use href="#dn"/></svg></button>
          <button class="row"><svg class="i"><use href="#movelay"/></svg><span>Перенести на другой слой</span><svg class="d"><use href="#dn"/></svg></button>
        </div>
      </div>
      <h2>Слои<svg class="d"><use href="#dn"/></svg></h2>
    </section>
    <section class="panel p-groups">
      <div class="body"><button class="big"><svg><use href="#group"/></svg><span>Группа</span></button></div>
      <h2>Группы<svg class="d"><use href="#dn"/></svg></h2>
    </section>
    <section class="panel p-base">
      <div class="body"><button class="big"><svg><use href="#base"/></svg><span>Базовый</span><svg class="d"><use href="#dn"/></svg></button></div>
      <h2>Вид</h2>
    </section>
  </main>

  <nav class="files" aria-label="Открытые файлы">
    <button class="ftab">Начало</button>
    <button class="ftab on"><span>1404358-1_3D</span><svg viewBox="0 0 8 8"><path stroke="#a9afb8" stroke-width="2" d="M0 0l8 8M8 0L0 8"/></svg></button>
    <button class="ftab add" aria-label="Новая вкладка"><svg viewBox="0 0 8 8"><path stroke="#a9afb8" stroke-width="2" d="M4 0v8M0 4h8"/></svg></button>
  </nav>

  <div class="work">
    <div class="viewport">
      <svg class="scene" viewBox="0 174 1911 837" preserveAspectRatio="xMidYMid slice">
        <defs>
          <pattern id="grid" patternUnits="userSpaceOnUse" x="61" y="700" width="154.250" height="89">
            <path fill="none" stroke="#262d36" d="M0 17.800L30.850 0M0 35.600L61.700 0M0 53.400L92.550 0M0 71.200L123.400 0M30.850 89L154.250 17.800M61.700 89L154.250 35.600M92.550 89L154.250 53.400M123.400 89L154.250 71.200M0 71.200L30.850 89M0 53.400L61.700 89M0 35.600L92.550 89M0 17.800L123.400 89M30.850 0L154.250 71.200M61.700 0L154.250 53.400M92.550 0L154.250 35.600M123.400 0L154.250 17.800"/>
            <path fill="none" stroke="#353d49" d="M-2 -1.154L156.250 90.154M-2 90.154L156.250 -1.154"/>
          </pattern>
          <linearGradient id="wall" gradientUnits="userSpaceOnUse" x1="710" y1="0" x2="1150" y2="0"><stop offset="0" stop-color="#4d48c0"/><stop offset=".1" stop-color="#7572cb"/><stop offset=".25" stop-color="#9695cc"/><stop offset=".4" stop-color="#b0afcf"/><stop offset=".6" stop-color="#c3c3d2"/><stop offset="1" stop-color="#d0d0d3"/></linearGradient>
        </defs>
        <path fill="#212830" d="M0 174h1911v837H0z"/>
        <path fill="url(#grid)" d="M0 174h1911v837H0z"/>
        <path stroke="#256b2b" d="M0 398L986 968"/>
        <path stroke="#7b2630" d="M986 968L1911 432"/>
        <g stroke="#fff" stroke-width="2" stroke-linejoin="round">
          <path fill="url(#wall)" d="M710 555L712 535 722 517 735 500 757 484 785 472 817 463 847 459 867 457 887 457 910 458 942 463 960 467 1003 479 1053 497 1100 517 1143 542 1179 570 1253 623 1240 628 1179 585 1143 557 1102 533 1052 510 998 492 942 478 907 472 877 471 853 472 817 477 783 488 757 498 732 520 722 533 713 550z"/>
          <path fill="#d0d0d2" d="M676 573L677 585 685 610 703 643 732 677 757 699 791 722 982 831 982 846 791 736 753 712 728 687 703 658 687 628 677 593z"/>
          <path fill="#7471c2" d="M982 831L1056 789 1056 804 982 846zM1283 657L1359 613 1359 629 1285 671z"/>
          <path fill="#d0d0d2" d="M1240 630L1262 643 1247 651 1240 646z"/>
          <path fill="#e5e6d5" stroke-width="1" d="M742 474L772 459 810 446 845 440 885 437 910 437 960 441 985 444 1030 452 1083 465 1130 483 1168 502 1359 613 1283 657 1240 630 1253 623 1179 570 1143 542 1100 517 1053 497 1003 479 960 467 942 463 910 458 887 457 867 457 847 459 817 463 785 472 757 484 735 500 722 517 712 535 710 553 712 572 721 591 743 620 773 650 813 680 857 705 998 770 1011 763 1056 789 982 831 791 722 757 699 732 677 703 643 685 610 677 585 676 573 676 557 681 535 695 512 713 492z"/>
          <path fill="none" d="M676 573V557L681 535 695 512 713 492 742 474 772 459 810 446 845 440 885 437H910L960 441 985 444 1030 452 1083 465 1130 483 1168 502 1359 613M710 553L712 572 721 591 743 620 773 650 813 680 857 705 998 770 1011 763 1056 789M742 474L757 484V498"/>
          <path fill="none" stroke-width="1" d="M942 463v15M1179 570v15M791 722v14"/>
          <path fill="#7471c2" d="M1055 746L1214 654V667L1167 696 1055 755z"/>
          <path fill="#e5e6d5" d="M1046 741L1205 648 1214 654 1055 746z"/>
          <path fill="#d0d0d2" d="M1046 741L1055 746V753H1046z"/>
          <path fill="#7a77c6" d="M1033 774L1257 663V679L1047 782z"/>
          <path fill="#e5e6d5" d="M1025 769L1245 657 1257 663 1033 774z"/>
          <path fill="#d8d8dc" d="M1257 663L1263 666V681L1257 678z"/>
          <path fill="#7471c2" d="M1263 666L1283 656V671L1263 681z"/>
          <path fill="#e5e6d5" d="M1243 655L1262 643 1283 656 1263 666z"/>
          <path fill="#7471c2" d="M1250 655L1263 648 1272 654 1263 661z"/>
          <path fill="#d0d0d2" stroke="none" d="M1264 649L1271 654 1264 658z"/>
          <path fill="none" d="M1011 763L1056 789"/>
        </g>
        <g fill="none"><path stroke="#8482e8" d="M25.500 712v86"/><path stroke="#e88a8a" d="M1 784L76 741"/><path stroke="#8be89a" d="M0 755L51 784"/><path stroke="#fff" fill="#212830" d="M22.500 766.500h6v6h-6z"/></g>
        <g stroke-width="5" stroke-linecap="round"><path stroke="#61c25b" d="M986 967L954 948"/><path stroke="#b85450" d="M986 967L1021 948"/><path stroke="#3f67a8" d="M986 967V929"/></g>
        <g class="axis-names" text-anchor="middle"><text x="990" y="924" fill="#2a62d8">Z</text><text x="954" y="943" fill="#2f9e2f">Y</text><text x="1024" y="943" fill="#c0393d">X</text></g>
      </svg>

      <div class="vlabel"><button>[−]</button><button>[ЮЗ изометрия]</button><button>[Концептуальный]</button></div>
      <div class="vwins">
        <button aria-label="Свернуть окно"><svg viewBox="0 0 12 12"><path stroke="#fff" stroke-width="3" d="M2 9h9"/></svg></button>
        <button aria-label="Восстановить окно"><svg viewBox="0 0 12 12"><path fill="none" stroke="#fff" stroke-width="1.500" d="M4 3V1h7v8H9"/><path fill="none" stroke="#fff" stroke-width="2" d="M2 4h6v7H2z"/></svg></button>
        <button aria-label="Закрыть окно"><svg viewBox="0 0 12 12"><path stroke="#fff" stroke-width="2.500" d="M2 2l8 8M10 2l-8 8"/></svg></button>
      </div>

      <div class="cube">
        <svg viewBox="1764 236 130 118">
          <ellipse cx="1829" cy="307" rx="56" ry="35" fill="none" stroke="#454b53" stroke-width="14"/>
          <g class="compass"><text transform="translate(1786 285) rotate(-20)">С</text><text transform="translate(1866 285) rotate(-20)">В</text><text transform="translate(1774 330) rotate(30)" class="lg">З</text><text transform="translate(1862 332) rotate(30)" class="lg">Ю</text></g>
          <path fill="#b9babb" d="M1795 259L1829 243 1864 259 1829 280z"/>
          <path fill="#aeafb0" d="M1795 259L1829 280V319L1796 298z"/>
          <path fill="#9d9ea0" d="M1864 259L1829 280V319L1862 298z"/>
          <path fill="none" stroke="#585b60" stroke-dasharray="3 1" d="M1795 259L1829 280 1864 259M1829 280V319"/>
          <g class="faces"><text transform="translate(1813 270) rotate(-25)">Сверху</text><text transform="translate(1799 289) rotate(26)" class="sm">Слева</text><text transform="translate(1831 304) rotate(-29)" class="xs">Спереди</text></g>
        </svg>
        <button class="wcs">МСК <svg viewBox="0 0 10 8"><path fill="#a9acb8" stroke="#ddd" d="M1 1h8L5 6z"/></svg></button>
      </div>

      <nav class="navbar" aria-label="Панель навигации">
        <svg class="x" viewBox="0 0 8 8"><circle cx="4" cy="4" r="3.500" fill="none" stroke="#444a51"/><path stroke="#444a51" d="M2 2l4 4M6 2L2 6"/></svg>
        <button aria-label="Штурвал"><svg viewBox="0 0 24 24"><path fill="none" stroke="#40464d" stroke-width="1.300" d="M12 1h11v11a11 11 0 1 1-11-11z"/><circle cx="12" cy="12" r="8" fill="none" stroke="#40464d"/><circle cx="12" cy="12" r="5" fill="none" stroke="#40464d" stroke-width="1.300"/></svg></button>
        <svg class="d"><use href="#dn"/></svg>
        <button aria-label="Панорамирование"><svg viewBox="0 0 24 24"><path fill="none" stroke="#40464d" stroke-width="1.300" d="M7 23L1 13q1-2 5 2L5 5q2-2 3 1l2 6V2q2-2 3 0l1 10 2-9q2-1 3 1l-1 9 3-5q3 0 1 4l-4 11z"/></svg></button>
        <button aria-label="Зумирование"><svg viewBox="0 0 24 24"><path fill="none" stroke="#40464d" stroke-width="1.500" d="M1 1l15 15M16 1L1 16M1 5V1h4M12 1h4v4M1 12v4h4"/><circle cx="17" cy="16" r="5" fill="#666c73" stroke="#40464d"/><path stroke="#40464d" stroke-width="3" d="M20 20l4 4"/></svg></button>
        <svg class="d"><use href="#dn"/></svg>
        <button aria-label="Орбита"><svg viewBox="0 0 24 24"><path fill="none" stroke="#40464d" stroke-width="1.400" d="M10 23V6H8l4-5 4 5h-2v17z"/><ellipse cx="12" cy="14" rx="11" ry="4" fill="none" stroke="#40464d" stroke-width="1.400"/></svg></button>
        <svg class="d"><use href="#dn"/></svg>
        <button aria-label="ShowMotion"><svg viewBox="0 0 24 24"><path fill="none" stroke="#40464d" stroke-width="1.300" d="M1 1h6v6H1zM9 1h6v6H9zM17 1h6v6h-6zM1 10h16v13H1z"/><path fill="#40464d" d="M6 12l7 4-7 4z"/></svg></button>
        <svg class="x end" viewBox="0 0 8 8"><circle cx="4" cy="4" r="3.500" fill="none" stroke="#444a51"/><path stroke="#444a51" d="M2 4h4"/></svg>
      </nav>

      <div class="command">
        <ol class="history"><li>Команда:</li><li>Команда: _WSCURRENT</li><li>Новое значение WSCURRENT &lt;"Mechanical"&gt;: 3D моделирование</li></ol>
        <div class="cmdrow">
          <div class="cmdtools">
            <svg class="grip" viewBox="0 0 6 18"><path stroke="#b8bcc2" stroke-width="2" stroke-dasharray="2 1" d="M1 0v18M5 0v18"/></svg>
            <button aria-label="Закрыть"><svg viewBox="0 0 12 12"><path stroke="#c4c8ce" stroke-width="2" d="M2 2l8 8M10 2l-8 8"/></svg></button>
            <button aria-label="Настройка"><svg viewBox="0 0 14 14"><path stroke="#c4c8ce" stroke-width="2.500" d="M1 13l7-7"/><path fill="none" stroke="#c4c8ce" stroke-width="2.500" d="M9 1q-3 2-1 5t5-1"/></svg></button>
          </div>
          <label class="cmdline"><svg class="prompt" viewBox="0 0 28 14"><path fill="none" stroke="#555" stroke-width="1.500" d="M1 2h14v11H1z"/><path fill="#555" d="M1 1h14v3H1zM19 5h8l-4 5z"/><path fill="none" stroke="#555" d="M3 6l3 2-3 2M7 11h5"/></svg><input type="text" aria-label="Командная строка" placeholder="Введите команду"><svg class="up" viewBox="0 0 8 8"><path fill="#555" d="M0 6h8L4 2z"/></svg></label>
        </div>
      </div>
    </div>
    <div class="scroll"></div>
  </div>

  <footer class="status">
    <nav class="layouts" aria-label="Листы">
      <button class="on">Модель</button><button>Лист1</button><button>Лист2</button>
      <button class="add" aria-label="Новый лист"><svg viewBox="0 0 8 8"><path stroke="#a9afb8" stroke-width="2" d="M4 0v8M0 4h8"/></svg></button>
    </nav>
    <div class="modes">
      <button class="model">МОДЕЛЬ</button>
      <button class="on" aria-label="Орто"><svg><use href="#s-ortho"/></svg></button>
      <button aria-label="Полярное отслеживание"><svg><use href="#s-polar"/></svg></button>
      <button class="m" aria-label="Углы"><svg class="d"><use href="#dn"/></svg></button>
      <button aria-label="Изометрия"><svg><use href="#s-iso"/></svg></button>
      <button class="m" aria-label="Плоскости"><svg class="d"><use href="#dn"/></svg></button>
      <button class="on" aria-label="Объектное отслеживание"><svg><use href="#s-track"/></svg></button>
      <button class="on" aria-label="Объектная привязка"><svg><use href="#s-snap"/></svg></button>
      <button class="m" aria-label="Привязки"><svg class="d"><use href="#dn"/></svg></button>
      <button aria-label="Рабочие пространства"><svg><use href="#gear"/></svg></button>
      <button class="m" aria-label="Список пространств"><svg class="d"><use href="#dn"/></svg></button>
      <button class="w" aria-label="Монитор аннотаций"><svg><use href="#s-plus"/></svg></button>
      <button class="w" aria-label="Быстрые свойства"><svg><use href="#s-quick"/></svg></button>
      <button aria-label="Блокировка ПИ"><svg><use href="#s-lock"/></svg></button>
      <button class="on" aria-label="Закрепление"><svg><use href="#s-ui"/></svg></button>
      <button class="w" aria-label="Изоляция объектов"><svg><use href="#s-iso2"/></svg></button>
      <button aria-label="Аппаратное ускорение"><svg><use href="#s-hw"/></svg></button>
      <button aria-label="Производительность"><svg><use href="#s-perf"/></svg></button>
      <button class="w" aria-label="Адаптация"><svg><use href="#s-menu"/></svg></button>
    </div>
  </footer>

  <aside class="tip" role="dialog" aria-label="Производительность 3D-графики">
    <svg class="tip-bulb" viewBox="0 0 16 28"><path fill="#e9dfae" stroke="#55523f" d="M8 1a7 7 0 0 1 7 7c0 5-4 6-4 12H5C5 14 1 13 1 8a7 7 0 0 1 7-7z"/><path fill="#444" d="M5 20h6v5l-2 2H7l-2-2z"/></svg>
    <div>
      <h3>Производительность 3D-графики</h3>
      <p>Можно улучшить производительность операций 3D-панорамирования, зумирования и орбиты.</p>
      <a href="#">Больше не выводить это окно</a>
    </div>
    <button class="tip-close" aria-label="Закрыть подсказку"><svg viewBox="0 0 12 12"><circle cx="6" cy="6" r="6" fill="#5a5a5a"/><path stroke="#eee" d="M4 4l4 4M8 4L4 8"/></svg></button>
    <button class="tip-more" aria-label="Подробнее"><svg viewBox="0 0 12 10"><path fill="#4a4a4a" d="M0 0h12L6 10z"/></svg></button>
  </aside>
</div>
</body>
</html>
```
FILE: styles.css
```css
* { box-sizing: border-box; }
body {
  margin: 0;
  background: #212830;
  color: #e9ebee;
  font: 12px/15px "Noto Sans", "Open Sans", sans-serif;
}
h1, h2, h3, p, ol { margin: 0; padding: 0; font-size: 12px; font-weight: 400; }
button, select, input { font: inherit; color: inherit; border: 0; background: none; padding: 0; margin: 0; }
button { display: flex; align-items: center; justify-content: center; white-space: nowrap; }
svg { display: block; flex: none; }
.defs { position: absolute; width: 0; height: 0; }
.icon-text { font: 10px "Liberation Sans", sans-serif; fill: #86c8fa; }
.i { width: 16px; height: 16px; }
.d { width: 8px; height: 8px; }

.app { position: relative; display: flex; flex-direction: column; height: 100vh; overflow: hidden; }

/* title bar */
.titlebar { display: flex; height: 45px; flex: none; }
.logo { width: 41px; height: 41px; border: 1px solid #000; background: linear-gradient(160deg, #d8d8d8, #8a8a8a); }
.logo svg { width: 40px; height: 40px; }
.logo-m { font: bold 8px "Liberation Sans", sans-serif; fill: #000; }
.bars { flex: 1; min-width: 0; }
.topline { display: flex; align-items: center; height: 22px; }
.qat { display: flex; width: 281px; padding-left: 5px; }
.qat button { width: 24px; height: 22px; }
.qat button svg { width: 18px; height: 16px; }
.qat .tiny { width: 12px; }
.qat .tiny svg { width: 8px; height: 8px; }
.qat .after { width: 24px; }
.combo { position: relative; display: flex; align-items: center; height: 22px; background: #4d586b; border: 1px solid #2f3744; }
.combo select { flex: 1; min-width: 0; height: 20px; appearance: none; padding-left: 3px; }
.combo .d { position: absolute; right: 2px; pointer-events: none; }
.combo .i { margin-left: 3px; }
.combo .d, h2 .d { width: 10px; height: 10px; }
.workspace { width: 178px; height: 20px; background: #3b4453; border: 0; }
.qat-more { width: 18px; }
.qat-more svg { width: 8px; height: 10px; }
.caption { flex: 1; display: flex; gap: 12px; justify-content: center; padding-left: 8px; }
.infocenter { display: flex; align-items: center; gap: 2px; }
.tiny { width: 11px; height: 16px; }
.tiny svg { width: 8px; height: 8px; }
.search { width: 178px; height: 21px; padding: 0 3px; background: #4d586b; font-style: italic; font-size: 11px; }
.search::placeholder { color: #b4bac4; }
.ic { width: 22px; }
.ic svg { width: 15px; height: 15px; }
.sign { gap: 4px; }
.sign .i { width: 14px; height: 14px; }
.help { margin-left: 4px; padding-left: 10px; border-left: 1px solid #3b4453; height: 18px; }
.help span { width: 14px; height: 14px; border-radius: 7px; background: #fff; color: #1c4aa8; font-weight: 700; line-height: 14px; }
.wins { display: flex; gap: 11px; margin-left: 67px; padding-right: 4px; }
.wins svg { width: 14px; height: 12px; }
.tabs { display: flex; height: 18px; margin-top: 5px; padding-left: 5px; }
.tabs button { padding: 0 8px 2px; color: #b2b7bf; }
.tabs .on { background: #3b4453; color: #fff; }
.tabs .ribbon-min { padding: 0 24px 2px; }
.ribbon-min svg { width: 24px; height: 8px; }

/* ribbon */
.ribbon { display: flex; height: 97px; flex: none; margin-left: 2px; background: #3b4453; }
.panel { display: flex; flex-direction: column; flex: none; border-right: 1px solid #252c36; min-width: 0; }
.panel .body { height: 79px; padding-top: 4px; }
.panel h2 { position: relative; display: flex; align-items: center; justify-content: center; gap: 4px; height: 16px; }
.launch { position: absolute; right: 4px; width: 8px; height: 8px; }
.body { display: grid; grid-auto-rows: 24px; align-content: start; }
.big { flex-direction: column; justify-content: flex-start; height: 72px; padding-top: 3px; white-space: normal; }
.big > svg:first-child { width: 32px; height: 32px; margin-bottom: 4px; }
.big.on { background: #44597090; border: 1px solid #86c8fa; padding-top: 2px; }
.row { gap: 5px; justify-content: flex-start; height: 24px; }
.row .d { margin-left: 3px; }
.sq { height: 24px; }
.dd { height: 24px; }
.strip { display: flex; }
.p-model { width: 234px; }
.p-model .body { grid-template-columns: 56px 72px 1fr; }
.p-model .rows { padding-left: 6px; }
.p-mesh { width: 81px; }
.p-mesh .body { grid-template-columns: 54px 24px; }
.p-mesh .sq { width: 24px; }
.p-solid { width: 188px; }
.p-solid .body { grid-template-columns: 28px 28px 1fr; padding-left: 1px; }
.p-solid .row { padding-left: 3px; }
.p-draw { width: 94px; }
.p-draw .body { grid-template-columns: 24px 24px 30px 8px; padding-left: 3px; }
.p-edit { width: 145px; }
.p-edit .body { grid-template-columns: 27px 28px 24px 28px 24px 8px; }
.p-ucs { width: 145px; }
.p-ucs .body { grid-template-columns: 26px 8px 30px 24px 26px 24px; padding-left: 2px; }
.p-ucs .combo { grid-column: 3 / 7; margin-left: 6px; }
.p-view { width: 205px; }
.p-view .body { grid-template-columns: 1fr; padding-left: 2px; padding-right: 2px; align-items: center; }
.p-view .row { padding-left: 4px; }
.p-select { width: 210px; }
.p-select .body { grid-template-columns: 42px 88px 68px 10px; padding-left: 2px; }
.p-select .giz { padding-left: 8px; }
.p-select .side { padding-top: 36px; height: 72px; }
.p-layers { width: 229px; }
.p-layers .sq { width: 27px; }
.p-layers .dd { width: 8px; }
.p-layers .row { padding-left: 6px; }
.p-layers .body { align-items: center; }
.p-layers .combo { width: 209px; margin-left: 2px; }
.swatch { width: 14px; height: 14px; margin: 0 1px 0 5px; background: #fff; border: 1px solid #000; }
.p-groups { width: 70px; }
.p-groups .body { grid-template-columns: 50px; }
.p-base { width: 76px; }
.p-base .body { grid-template-columns: 76px; }

/* file tabs */
.files { display: flex; gap: 3px; height: 32px; flex: none; padding: 5px 0 0 22px; border-bottom: 5px solid #3b4453; }
.ftab { height: 22px; border-radius: 8px 8px 0 0; background: #2b323d; color: #b2b7bf; justify-content: flex-start; padding: 0 10px; width: 120px; }
.ftab.on { width: 120px; background: #3b4453; color: #fff; justify-content: space-between; }
.ftab svg { width: 8px; height: 8px; }
.ftab.add { width: 22px; height: 14px; margin-top: 4px; padding: 0; margin-left: 6px; justify-content: center; border-radius: 6px; }

/* viewport */
.work { flex: 1; display: flex; min-height: 0; }
.viewport { position: relative; flex: 1; min-width: 0; overflow: hidden; }
.scroll { width: 8px; background: #b9d3ee; border-right: 1px solid #3bb0ea; border-left: 1px solid #8fa6be; }
.scene { position: absolute; inset: 0; width: 100%; height: 100%; }
.axis-names { font: 16px "Liberation Sans", sans-serif; }
.vlabel { position: absolute; left: 3px; top: 6px; display: flex; }
.vwins { position: absolute; right: 9px; top: 9px; display: flex; gap: 8px; }
.vwins svg { width: 12px; height: 12px; }
.cube { position: absolute; right: 17px; top: 62px; width: 130px; }
.cube > svg { width: 130px; height: 118px; }
.compass { font: 14px "Liberation Sans", sans-serif; fill: #9a9da2; }
.compass .lg { font-size: 19px; fill: #b4b6ba; }
.faces { font: 10px "Noto Sans", sans-serif; fill: #3a3d42; }
.faces .sm { font-size: 9px; }
.faces .xs { font-size: 8px; }
.wcs { width: 47px; height: 18px; margin: 13px 0 0 41px; gap: 4px; border-radius: 4px; background: #8e919d; color: #3c3f48; font: 11px "Liberation Sans", sans-serif; }
.wcs svg { width: 10px; height: 8px; }
.navbar { position: absolute; right: 3px; top: 236px; width: 32px; height: 212px; display: flex; flex-direction: column; align-items: center; gap: 3px; background: #666c73; border-radius: 4px; padding-top: 2px; opacity: .85; }
.navbar button svg { width: 22px; height: 22px; }
.navbar button { height: 26px; }
.navbar .d { opacity: .4; }
.navbar .x { width: 8px; height: 8px; align-self: flex-end; margin: 0 2px 6px 0; }
.navbar .end { margin: auto 2px 2px 0; }

/* command window */
.command { position: absolute; left: 384px; right: 376px; bottom: 1px; font-family: "Liberation Mono", monospace; }
.history { list-style: none; display: flex; flex-direction: column; align-items: flex-start; gap: 5px; padding: 0 0 3px 62px; }
.history li { padding: 0 2px; background: #5b5f63; border-radius: 2px; color: #f2f2f2; }
.history li:first-child { color: #c4c4c4; }
.cmdrow { display: flex; height: 25px; }
.cmdtools { display: flex; align-items: center; gap: 6px; width: 56px; padding-left: 4px; background: #2a303b; }
.cmdtools .grip { width: 6px; height: 18px; }
.cmdtools button svg { width: 13px; height: 13px; }
.cmdline { flex: 1; display: flex; align-items: center; padding: 0 6px 0 4px; gap: 6px; background: #bfbfc1; border-radius: 2px; }
.cmdline input { flex: 1; font-style: italic; color: #333; }
.cmdline input::placeholder { color: #5c5c5e; }
.prompt { width: 26px; height: 14px; }
.up { width: 8px; height: 8px; }

/* status bar */
.status { display: flex; justify-content: space-between; height: 23px; flex: none; border-top: 1px solid #434b57; background: #222933; }
.layouts { display: flex; padding-left: 14px; }
.layouts button { height: 17px; width: 53px; margin-right: 2px; padding: 0; background: #2b323d; color: #b2b7bf; border-radius: 0 0 8px 8px; }
.layouts .on { width: 65px; background: #3b4453; color: #fff; font-weight: 700; }
.layouts .add { width: 22px; margin-left: 4px; }
.layouts .add svg { width: 8px; height: 8px; }
.modes { display: flex; gap: 1px; padding-top: 2px; }
.modes button { width: 23px; height: 20px; background: #363e4b; }
.modes button svg { width: 16px; height: 16px; }
.modes .m { width: 17px; margin-left: -1px; }
.modes .m svg { width: 10px; height: 10px; }
.modes .w { width: 25px; }
.modes .on { background: #5287c4; }
.modes .model { width: 57px; margin-right: 2px; color: #fff; }

/* help balloon */
.tip {
  position: absolute; right: 133px; top: 32px; width: 237px; height: 135px;
  display: flex; gap: 10px; padding: 10px 14px 0 10px;
  background: linear-gradient(#d2d2d2e6, #b4b4b4e6 50%, #c8c8c8e6);
  border: 1px solid #8f8f8f; border-radius: 5px; color: #111;
}
.tip::before { content: ""; position: absolute; right: 12px; top: -11px; border: 11px solid transparent; border-top: 0; border-bottom-color: #d2d2d2; }
.tip-bulb { width: 15px; height: 26px; }
.tip h3 { font-weight: 700; margin-bottom: 5px; padding-right: 20px; }
.tip p { margin-bottom: 5px; }
.tip a { color: #1414c8; white-space: nowrap; }
.tip-close { position: absolute; right: 6px; top: 4px; }
.tip-close svg { width: 12px; height: 12px; }
.tip-more { position: absolute; right: 10px; bottom: 9px; }
.tip-more svg { width: 12px; height: 10px; }
```
